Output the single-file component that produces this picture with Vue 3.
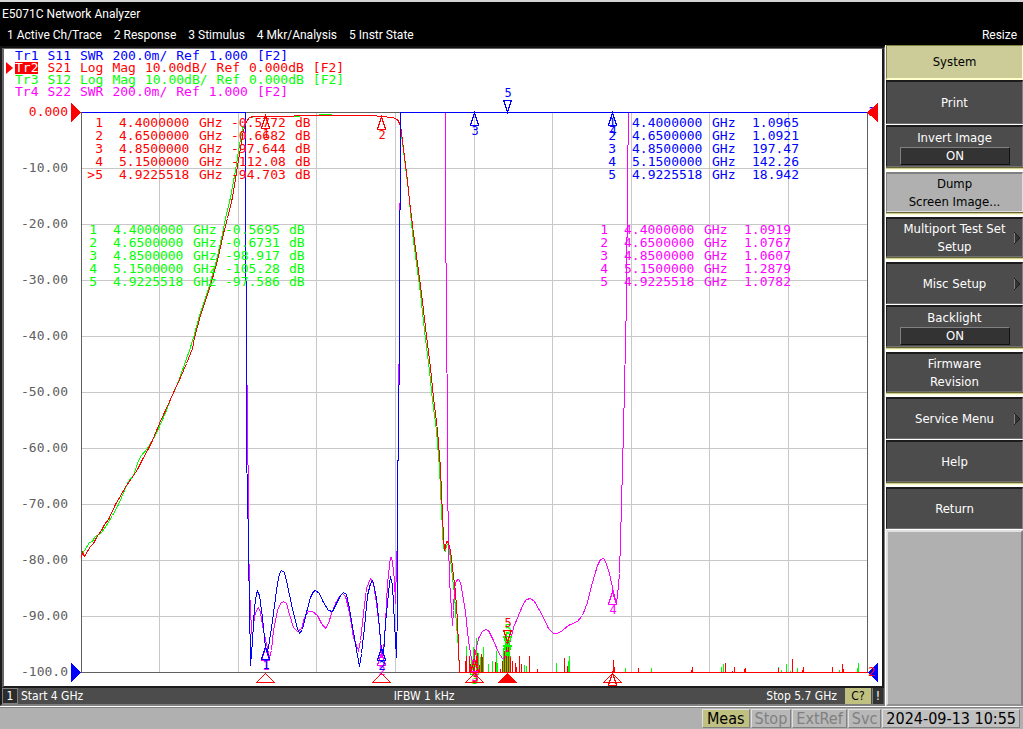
<template>
  <div class="analyzer">
    <header class="title-bar">E5071C Network Analyzer</header>
    <nav class="menu-bar">
      <button v-for="m in menus" :key="m" type="button">{{ m }}</button>
      <button type="button" class="resize">Resize</button>
    </nav>

    <div class="workspace">
      <main class="channel">
        <div class="screen">
          <ul class="traces">
            <li v-for="t in traces" :key="t.name" :class="[t.color, { active: t.active }]">
              <span class="trace-name">{{ t.name }}</span>
              <span v-for="(w, i) in t.words" :key="i">{{ w }}</span>
            </li>
          </ul>

          <svg class="plot" viewBox="4 86 878 600" role="img" aria-label="S-parameter traces">
            <!-- grid -->
            <g class="grid">
              <line v-for="x in gridX" :key="'x' + x" :x1="x" :x2="x" y1="112" y2="673" />
              <line v-for="y in gridY" :key="'y' + y" x1="81" x2="868" :y1="y" :y2="y" />
            </g>
            <rect class="frame" x="81.5" y="112.5" width="786" height="560" />

            <g class="axis">
              <text
                v-for="(l, i) in levels"
                :key="l"
                x="68"
                :y="116 + i * 56"
                :class="{ ref: i === 0 }"
              >{{ l }}</text>
            </g>

            <!-- measured traces -->
            <polyline class="trace green" :points="s12" />
            <path class="trace green" :d="spikes(noiseGreen)" />
            <polyline class="trace magenta" :points="s22" />
            <polyline class="trace red" :points="s21" />
            <path class="trace red" :d="spikes(noiseRed)" />
            <polyline class="trace blue" :points="s11" />

            <!-- markers sitting on the traces -->
            <g v-for="(m, i) in markers" :key="i" :class="['marker', m.color]">
              <path v-if="m.down" :d="`M${m.x + 0.5} ${m.y}l-4 -12h8z`" />
              <path v-else :d="`M${m.x + 0.5} ${m.y}l-4 12h8z`" />
              <text :x="m.x + 1" :y="m.down ? m.y - 15 : m.y + 22">{{ m.n }}</text>
            </g>

            <!-- stimulus positions below the axis -->
            <path
              v-for="x in [265.5, 381.5, 474.5, 507.5, 612.5]"
              :key="x"
              :class="['stimulus', { filled: x === 507.5 }]"
              :d="`M${x} 673.5l-9 9h18z`"
            />

            <!-- reference level arrows -->
            <path class="fill-red" d="M71 103v19l10-9.500z" />
            <path class="fill-blue" d="M71 663v19l10-9.500z" />
            <text class="tag blue" x="868" y="116">1</text>
            <path class="fill-red" d="M878 103v19l-11-9.500z" />
            <path class="fill-blue" d="M878 663v19l-10-9.500z" />
            <text class="tag red" x="868" y="676">2</text>
          </svg>

          <table v-for="r in readouts" :key="r.id" :class="['readout', r.id, r.color]">
            <tbody>
              <tr v-for="(v, i) in r.values" :key="i">
                <td class="mark">{{ r.id === 's21' && i === 4 ? '>5' : i + 1 }}</td>
                <td class="freq">{{ freqs[i] }}</td>
                <td class="unit">GHz</td>
                <td class="value">{{ v }}</td>
                <td v-if="r.db" class="db">dB</td>
              </tr>
            </tbody>
          </table>
        </div>

        <div class="channel-bar">
          <span class="channel-no">1</span>
          <span class="start">Start 4 GHz</span>
          <span class="ifbw">IFBW 1 kHz</span>
          <span class="stop">Stop 5.7 GHz</span>
          <span class="cor">C?</span>
          <span class="warn">!</span>
        </div>
      </main>

      <aside class="softkeys">
        <h2>System</h2>
        <ul>
          <li v-for="k in keys" :key="k.label" :class="{ first: k.first, last: k.last }">
            <button type="button" :class="{ selected: k.selected }">
              <span class="key-label">{{ k.label }}</span>
              <span v-if="k.state" class="key-state">{{ k.state }}</span>
              <svg v-if="k.sub" class="arrow" viewBox="0 0 6 12" aria-hidden="true">
                <path d="M0 0L6 6L0 12z" fill="#333" />
                <path d="M0.500 0V12" stroke="#808080" />
                <path d="M0 0L6 6L0 12" fill="none" stroke="#1c1c1c" />
              </svg>
            </button>
          </li>
        </ul>
        <div class="blank"></div>
      </aside>
    </div>

    <footer class="status-bar">
      <span class="cell on">Meas</span>
      <span class="cell">Stop</span>
      <span class="cell">ExtRef</span>
      <span class="cell">Svc</span>
      <time class="cell clock" datetime="2024-09-13T10:55">2024-09-13 10:55</time>
    </footer>
  </div>
</template>

<script setup>
const menus = ["1 Active Ch/Trace", "2 Response", "3 Stimulus", "4 Mkr/Analysis", "5 Instr State"];

const traces = [
  { name: "Tr1", color: "blue", words: ["S11", "SWR", "200.0m/", "Ref", "1.000", "[F2]"] },
  { name: "Tr2", color: "red", active: true, words: ["S21", "Log", "Mag", "10.00dB/", "Ref", "0.000dB", "[F2]"] },
  { name: "Tr3", color: "green", words: ["S12", "Log", "Mag", "10.00dB/", "Ref", "0.000dB", "[F2]"] },
  { name: "Tr4", color: "magenta", words: ["S22", "SWR", "200.0m/", "Ref", "1.000", "[F2]"] },
];

const keys = [
  { label: "Print" },
  { label: "Invert Image", state: "ON", last: true },
  { label: "Dump\nScreen Image...", selected: true, first: true, last: true },
  { label: "Multiport Test Set\nSetup", sub: true, first: true, last: true },
  { label: "Misc Setup", sub: true, first: true },
  { label: "Backlight", state: "ON", last: true },
  { label: "Firmware\nRevision", first: true, last: true },
  { label: "Service Menu", sub: true, first: true },
  { label: "Help", last: true },
  { label: "Return", first: true },
];

const freqs = ["4.4000000", "4.6500000", "4.8500000", "5.1500000", "4.9225518"];

const readouts = [
  { id: "s21", color: "red", db: true, values: ["-0.5772", "-0.6682", "-97.644", "-112.08", "-94.703"] },
  { id: "s12", color: "green", db: true, values: ["-0.5695", "-0.6731", "-98.917", "-105.28", "-97.586"] },
  { id: "s11", color: "blue", values: ["1.0965", "1.0921", "197.47", "142.26", "18.942"] },
  { id: "s22", color: "magenta", values: ["1.0919", "1.0767", "1.0607", "1.2879", "1.0782"] },
];

const gridX = [159.5, 238.5, 316.5, 395.5, 474.5, 552.5, 631.5, 709.5, 788.5];
const gridY = [168.5, 224.5, 280.5, 336.5, 392.5, 448.5, 504.5, 560.5, 616.5];
const levels = ["0.000", "-10.00", "-20.00", "-30.00", "-40.00", "-50.00", "-60.00", "-70.00", "-80.00", "-90.00", "-100.0"];

const s21 =
  "81,558 82,552 84,556 87,551 90,546 93,543 95,539 98,534 101,530 104,524 108,519 115,504 122,492 126,485 131,478 137,469 142,459 148,448 152,440 159,423 164,412 170,399 174,390 180,377 186,363 192,348 194,337 200,315 210,285 217,260 223,233 227,218 232,197 236,172 240,147 243,130 246,121 249,117 253,116 267,116 320,115 372,115 380,116 392,117 397,119 400,125 402,140 407,180 409,200 413,233 417,263 421,293 425,327 430,367 433,397 437,430 440,468 442,515 443,538 444,549 445,547 446,541 448,542 450,550 452,567 455,592 457,620 458,647 459,672 867,672";

const s12 =
  "81,554 84,550 89,542 92,541 94,537 101,532 106,525 112,515 118,504 124,490 128,481 133,475 137,463 140,456 147,448 153,438 159,426 166,410 170,399 175,388 179,378 185,361 189,350 193,337 199,315 209,285 216,260 222,233 225,218 230,197 235,170 239,144 242,128 246,121 249,117 256,116 282,116 318,115 319,114 331,114 332,115 372,115 380,116 392,117 397,119 400,126 402,142 408,190 412,233 420,293 424,330 429,370 432,400 436,430 439,468 442,530 443,548 445,551 446,545 448,543 449,550 451,568 454,594 456,625 458,648 459,672 867,672";

const s11 =
  "81,112 245,112 245,278 246,283 246,450 248,540 248,560 249,600 250,665 252,640 254,607 256,593 257,591 259,595 262,617 265,647 267,650 268,647 272,620 277,583 279,573 281,570 284,572 287,585 293,613 297,628 299,633 302,629 306,612 310,597 313,591 315,590 319,593 323,602 328,610 332,611 337,601 340,595 343,592 346,594 349,608 353,632 357,655 359,666 361,653 364,627 367,595 370,583 372,580 373,583 376,598 378,617 381,650 383,655 385,623 388,592 390,576 392,585 394,623 396,657 397,607 397,540 398,385 399,384 399,210 400,209 400,112 867,112";

const s22 =
  "81,112 245,112 245,278 246,283 246,384 247,385 248,540 249,585 250,613 252,640 253,623 255,612 258,607 260,612 263,630 267,648 269,657 271,650 273,630 277,610 280,603 283,601 286,603 289,614 293,627 297,631 301,628 304,617 308,611 312,611 317,615 321,623 325,628 328,623 331,613 335,603 339,596 342,593 345,596 349,612 353,637 358,650 360,640 363,613 366,588 370,578 373,583 376,603 379,627 381,657 383,650 385,623 387,583 389,565 390,557 391,557 392,562 394,580 395,603 396,562 397,540 398,385 398,364 399,363 399,203 400,202 400,112 445,112 445,262 446,263 447,480 448,540 449,580 451,610 452,625 453,610 454,587 456,580 458,579 460,582 462,593 465,612 468,640 471,658 473,664 475,652 478,638 482,631 485,629 488,630 493,640 498,652 502,658 505,657 510,640 513,627 518,615 523,603 526,599 530,598 534,601 542,615 548,628 553,633 557,633 562,630 568,625 577,621 582,615 587,602 592,582 597,565 600,559 603,558 605,561 609,573 613,592 616,603 617,595 619,573 620,540 623,430 626,300 627,178 628,112 867,112";

// [x, height] of every burst above the noise floor
const noiseGreen = [
  [466, 27], [471, 16], [473, 26], [474, 18], [476, 35], [478, 20], [480, 16], [483, 26], [488, 9],
  [492, 12], [496, 22], [497, 10], [503, 25], [505, 36], [506, 28], [507, 34], [509, 33], [510, 17],
  [524, 8], [526, 7], [529, 11], [556, 10], [568, 12], [569, 17], [625, 5], [651, 5], [721, 6],
  [723, 9], [736, 1], [778, 6], [781, 3], [786, 9], [790, 2], [797, 5], [839, 3], [857, 5], [858, 10],
];
const noiseRed = [
  [465, 12], [466, 17], [469, 17], [470, 9], [473, 14], [474, 24], [476, 17], [477, 20], [479, 8],
  [481, 19], [482, 16], [495, 11], [500, 4], [502, 12], [504, 22], [506, 40], [508, 34], [510, 16],
  [512, 12], [515, 10], [516, 6], [519, 17], [521, 9], [529, 17], [537, 4], [564, 15], [567, 7],
  [613, 13], [614, 6], [638, 5], [691, 3], [692, 6], [725, 10], [732, 2], [734, 6], [744, 4],
  [745, 5], [778, 5], [792, 14], [802, 3], [803, 6], [832, 6], [842, 9], [843, 4],
];

const spikes = (list) => list.map(([x, h]) => `M${x} 672v-${h}`).join("");

const markers = [
  { n: 3, x: 474, y: 662, color: "green" },
  { n: 5, x: 507, y: 657, color: "green", down: true },
  { n: 5, x: 507, y: 648, color: "green", down: true },
  { n: 1, x: 265, y: 648, color: "magenta" },
  { n: 2, x: 381, y: 653, color: "magenta" },
  { n: 3, x: 474, y: 659, color: "magenta" },
  { n: 4, x: 612, y: 592, color: "magenta" },
  { n: 1, x: 265, y: 116, color: "red" },
  { n: 2, x: 381, y: 117, color: "red" },
  { n: 3, x: 474, y: 660, color: "red" },
  { n: 4, x: 612, y: 673, color: "red" },
  { n: 5, x: 507, y: 642, color: "red", down: true },
  { n: 1, x: 265, y: 647, color: "blue" },
  { n: 2, x: 381, y: 648, color: "blue" },
  { n: 3, x: 474, y: 113, color: "blue" },
  { n: 4, x: 612, y: 113, color: "blue" },
  { n: 5, x: 507, y: 112, color: "blue", down: true },
];
</script>

<style>
body {
  margin: 0;
  background: #b0b0b0;
}
</style>

<style scoped>
.analyzer {
  display: flex;
  flex-direction: column;
  min-height: 100vh;
  box-sizing: border-box;
  border-top: 2px solid #d4d4d4;
  font-family: "DejaVu Sans Condensed", "DejaVu Sans", sans-serif;
  font-size: 12px;
}

ul,
h2 {
  margin: 0;
  padding: 0;
  list-style: none;
  font-weight: normal;
}

button {
  border: none;
  padding: 0;
  background: none;
  color: inherit;
  font: inherit;
}

.red { color: #f00; }
.green { color: #0f0; }
.blue { color: #00f; }
.magenta { color: #f0f; }

/* title and menu */
.title-bar,
.menu-bar {
  background: #000;
  color: #fff;
  font-family: Roboto, "Noto Sans", sans-serif;
  font-size: 12px;
}

.title-bar {
  padding: 0 2px;
  line-height: 24px;
}

.menu-bar {
  display: flex;
  gap: 12px;
  padding: 0 6px 0 7px;
  line-height: 16px;
  height: 20px;
}

.menu-bar button {
  height: 17px;
}

.resize {
  margin-left: auto;
}

.workspace {
  display: flex;
  flex: 1;
}

/* measurement window */
.channel {
  display: flex;
  flex-direction: column;
  flex: 1;
  min-width: 0;
  border: 2px solid #1c1c1c;
  border-top-color: #111;
  border-right: 1px solid #808080;
  border-bottom: 2px solid #808080;
  box-sizing: border-box;
}

.screen {
  position: relative;
  flex: 1;
  background: #fff;
  border: 1px solid #666;
  border-left-width: 2px;
  border-right: 2px solid #1c1c1c;
  border-bottom: 2px solid #1c1c1c;
  font-family: "DejaVu Sans Mono", monospace;
  font-size: 13px;
}

.traces {
  padding: 1px 0 0 11px;
}

.traces li {
  position: relative;
  display: flex;
  gap: 9px;
  height: 12px;
  line-height: 12px;
}

.active .trace-name {
  background: #f00;
  color: #fff;
}

.active::before {
  content: "";
  position: absolute;
  left: -9px;
  top: 0;
  border: 6px solid transparent;
  border-left: 7px solid #f00;
  border-right: none;
}

.plot {
  display: block;
  width: 100%;
  margin-top: -12px;
}

.plot path,
.plot line,
.plot rect,
.plot polyline {
  shape-rendering: crispEdges;
}

.grid {
  stroke: #c8c8c8;
}

.frame {
  fill: none;
  stroke: #606060;
}

.axis text {
  fill: #606060;
  text-anchor: end;
}

.axis .ref {
  fill: #f00;
}

.trace {
  fill: none;
  stroke: currentColor;
  transform: translate(0.5px, 0.5px);
}

.marker path {
  fill: none;
  stroke: currentColor;
}

.marker text {
  fill: currentColor;
  text-anchor: middle;
  font-size: 12px;
}

.stimulus {
  fill: none;
  stroke: #f00;
}

.stimulus.filled,
.fill-red {
  fill: #f00;
}

.fill-blue {
  fill: #00f;
}

.tag {
  fill: currentColor;
  font-size: 12px;
}

/* marker readouts lie over the plot */
.readout {
  position: absolute;
  border-collapse: collapse;
  line-height: 13px;
}

.readout td {
  padding: 0 8px 0 0;
  white-space: nowrap;
}

.readout .mark {
  width: 8px;
  padding-right: 16px;
  text-align: right;
}

.readout .freq { width: 72px; }
.readout .unit { width: 24px; }
.readout .value { width: 56px; }

.readout.s21 { left: 83px; top: 67px; }
.readout.s21 .mark { width: 16px; }
.readout.s12 { left: 85px; top: 174px; }
.readout.s11 { right: 82px; top: 67px; }
.readout.s22 { right: 90px; top: 174px; }
.s11 .value,
.s22 .value { width: 48px; padding: 0 0 0 8px; }

.channel-bar {
  display: flex;
  align-items: center;
  height: 16px;
  padding-right: 1px;
  background: #4c4c4c;
  color: #fff;
}

.channel-no {
  width: 14px;
  border: 1px solid #808080;
  background: #2c2c2c;
  line-height: 14px;
  text-align: center;
}

.start {
  flex: 1;
  padding-left: 3px;
}

.ifbw {
  flex: 1;
}

.stop {
  padding-right: 8px;
}

.cor {
  width: 26px;
  background: #c0c080;
  color: #000;
  line-height: 16px;
  text-align: center;
}

.warn {
  width: 10px;
  margin-left: 1px;
  background: #333;
  border-left: 1px solid #808080;
  line-height: 16px;
  text-align: center;
}

/* soft key menu */
.softkeys {
  display: flex;
  flex-direction: column;
  width: 137px;
  margin-top: -1px;
  border-left: 1px solid #fff;
  background: #b0b0b0;
  font-size: 13px;
  line-height: 18px;
  text-align: center;
}

.softkeys h2 {
  height: 35px;
  box-sizing: border-box;
  background: #cccc99;
  border: 1px solid #ffffcc;
  border-left: 1px solid #808040;
  border-top-color: #808040;
  border-bottom-width: 2px;
  font-size: 13px;
  line-height: 32px;
}

.softkeys li {
  display: flex;
  flex-direction: column;
  height: 45px;
  box-sizing: border-box;
  background: #fff;
  padding-bottom: 1px;
}

.softkeys .first {
  padding-top: 2px;
}

.softkeys .last {
  padding-bottom: 0;
}

.last::after {
  content: "";
  height: 1px;
  border-top: 1px solid #666633;
  border-bottom: 1px solid #ffffcc;
  background: #cccc99;
}

.softkeys button {
  position: relative;
  flex: 1;
  min-height: 0;
  padding-top: 1px;
  background: #4c4c4c;
  border: 1px solid #1c1c1c;
  border-top-width: 2px;
  border-right-color: #808080;
  border-bottom: 1px solid #707070;
  color: #fff;
}

.softkeys .selected {
  background: #b0b0b0;
  border-color: #808080 #e0e0e0 #e0e0e0 #808080;
  color: #000;
}

.key-label {
  display: block;
  white-space: pre-line;
}

.key-state {
  display: block;
  margin: 0 12px 0 13px;
  border: 1px solid #808080;
  border-right-color: #111;
  border-bottom-color: #111;
  background: #333;
  line-height: 16px;
}

.arrow {
  position: absolute;
  right: 2px;
  top: 50%;
  width: 6px;
  height: 12px;
  margin-top: -6px;
}

.blank {
  flex: 1;
  border: 2px solid #e0e0e0;
  border-right-color: #808080;
  border-bottom-color: #909090;
}

/* instrument status */
.status-bar {
  display: flex;
  justify-content: flex-end;
  gap: 1px;
  padding: 2px 3px 1px;
  border-top: 1px solid #fff;
  box-shadow: inset 0 1px #808080;
  background: #b0b0b0;
  font-size: 16px;
}

.cell {
  padding: 0 3px;
  border: 1px solid #e0e0e0;
  border-right-color: #808080;
  border-bottom-color: #808080;
  background: #b8b8b8;
  color: #808080;
  line-height: 17px;
}

.on {
  padding: 0 4px;
  background: #c0c080;
  color: #000;
}

.clock {
  background: #c0c0c0;
  color: #000;
}
</style>
